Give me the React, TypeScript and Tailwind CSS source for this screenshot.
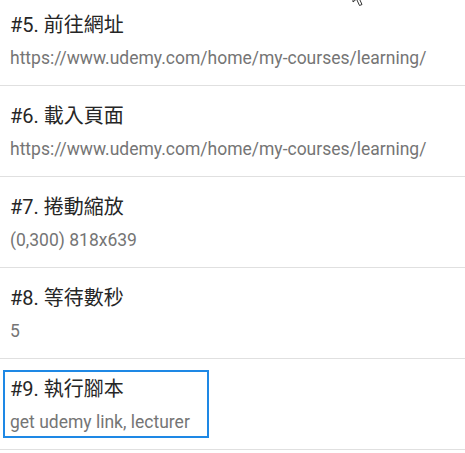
const steps = [
  { title: "#5. 前往網址", detail: "https://www.udemy.com/home/my-courses/learning/" },
  { title: "#6. 載入頁面", detail: "https://www.udemy.com/home/my-courses/learning/" },
  { title: "#7. 捲動縮放", detail: "(0,300) 818x639" },
  { title: "#8. 等待數秒", detail: "5" },
  { title: "#9. 執行腳本", detail: "get udemy link, lecturer" },
];

const selected = 4;

function StepRow({ title, detail, active }: { title: string; detail: string; active: boolean }) {
  return (
    <div className="border-b border-[#e0e0e0] py-[11px] pl-[3px]">
      <div
        className={
          active
            ? "w-fit border-2 border-[#1e88e5] pl-[5px] pr-[17px] pt-[3px] pb-[2px]"
            : "w-fit border-2 border-transparent pl-[5px] pr-[17px] pt-[3px] pb-[2px]"
        }
      >
        <div className="text-[20px] leading-[28px] text-[#262626]">{title}</div>
        <div className="mt-[7px] whitespace-nowrap text-[17.5px] leading-[24px] text-[#757575]">{detail}</div>
      </div>
    </div>
  );
}

export default function App() {
  return (
    <div
      className="relative h-[453px] w-[465px] overflow-hidden bg-white"
      style={{ fontFamily: 'Roboto, "Noto Sans CJK TC", sans-serif' }}
    >
      <svg className="absolute left-[352px] top-[-12px]" width="18" height="20" viewBox="0 0 18 20">
        <path d="M1 1 L1 14 L4.5 11 L7.5 17.5 L10 16.5 L7 10 L12 10 Z" fill="white" stroke="#333" strokeWidth="1" />
      </svg>
      <div className="mt-[-5px]">
        {steps.map((s, i) => (
          <StepRow key={s.title} title={s.title} detail={s.detail} active={i === selected} />
        ))}
      </div>
    </div>
  );
}
